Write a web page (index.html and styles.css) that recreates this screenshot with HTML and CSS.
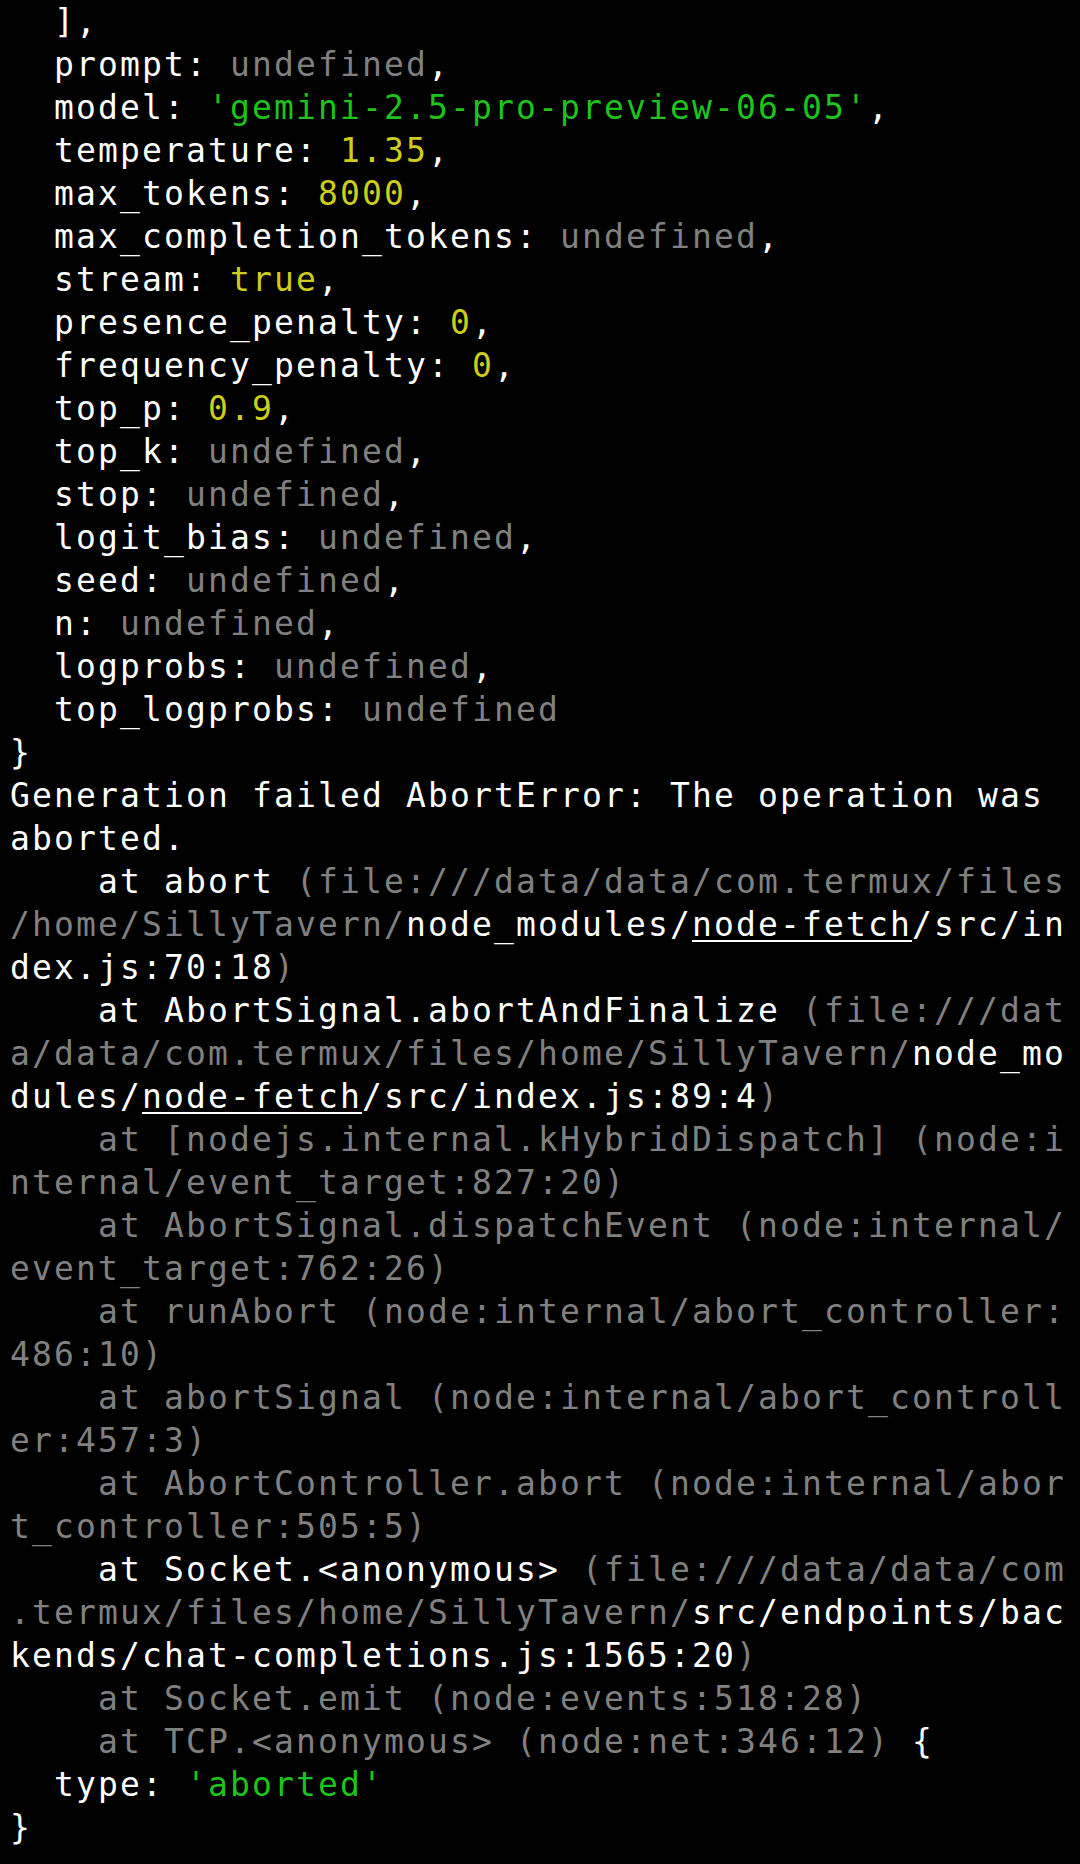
FILE: index.html
```html
<!DOCTYPE html>
<html>
<head>
<link rel="stylesheet" href="styles.css">
</head>
<body>

<pre class="term">  ],
  prompt: <span class="dim">undefined</span>,
  model: <span class="str">'gemini-2.5-pro-preview-06-05'</span>,
  temperature: <span class="num">1.35</span>,
  max_tokens: <span class="num">8000</span>,
  max_completion_tokens: <span class="dim">undefined</span>,
  stream: <span class="num">true</span>,
  presence_penalty: <span class="num">0</span>,
  frequency_penalty: <span class="num">0</span>,
  top_p: <span class="num">0.9</span>,
  top_k: <span class="dim">undefined</span>,
  stop: <span class="dim">undefined</span>,
  logit_bias: <span class="dim">undefined</span>,
  seed: <span class="dim">undefined</span>,
  n: <span class="dim">undefined</span>,
  logprobs: <span class="dim">undefined</span>,
  top_logprobs: <span class="dim">undefined</span>
}
Generation failed AbortError: The operation was 
aborted.
    at abort <span class="dim">(file:///data/data/com.termux/files</span>
<span class="dim">/home/SillyTavern/</span>node_modules/<span class="link">node-fetch</span>/src/in
dex.js:70:18<span class="dim">)</span>
    at AbortSignal.abortAndFinalize <span class="dim">(file:///dat</span>
<span class="dim">a/data/com.termux/files/home/SillyTavern/</span>node_mo
dules/<span class="link">node-fetch</span>/src/index.js:89:4<span class="dim">)</span>
<span class="dim">    at [nodejs.internal.kHybridDispatch] (node:i</span>
<span class="dim">nternal/event_target:827:20)</span>
<span class="dim">    at AbortSignal.dispatchEvent (node:internal/</span>
<span class="dim">event_target:762:26)</span>
<span class="dim">    at runAbort (node:internal/abort_controller:</span>
<span class="dim">486:10)</span>
<span class="dim">    at abortSignal (node:internal/abort_controll</span>
<span class="dim">er:457:3)</span>
<span class="dim">    at AbortController.abort (node:internal/abor</span>
<span class="dim">t_controller:505:5)</span>
    at Socket.&lt;anonymous&gt; <span class="dim">(file:///data/data/com</span>
<span class="dim">.termux/files/home/SillyTavern/</span>src/endpoints/bac
kends/chat-completions.js:1565:20<span class="dim">)</span>
<span class="dim">    at Socket.emit (node:events:518:28)</span>
<span class="dim">    at TCP.&lt;anonymous&gt; (node:net:346:12)</span> {
  type: <span class="str">'aborted'</span>
}</pre>

</body>
</html>
```

FILE: styles.css
```css
body {
  margin: 0;
  background-color: #000;
}

.term {
  margin: 0;
  padding: 0 0 0 10px;
  color: #fff;
  font-family: "DejaVu Sans Mono", "Liberation Mono", monospace;
  font-size: 33px;
  letter-spacing: 2.13px;
  line-height: 43px;
  white-space: pre;
}

.dim {
  color: #808080;
}

.str {
  color: #1cc41c;
}

.num {
  color: #cdcd1a;
}

.link {
  text-decoration: underline;
  text-underline-offset: 4px;
  text-decoration-thickness: 2px;
}
```
